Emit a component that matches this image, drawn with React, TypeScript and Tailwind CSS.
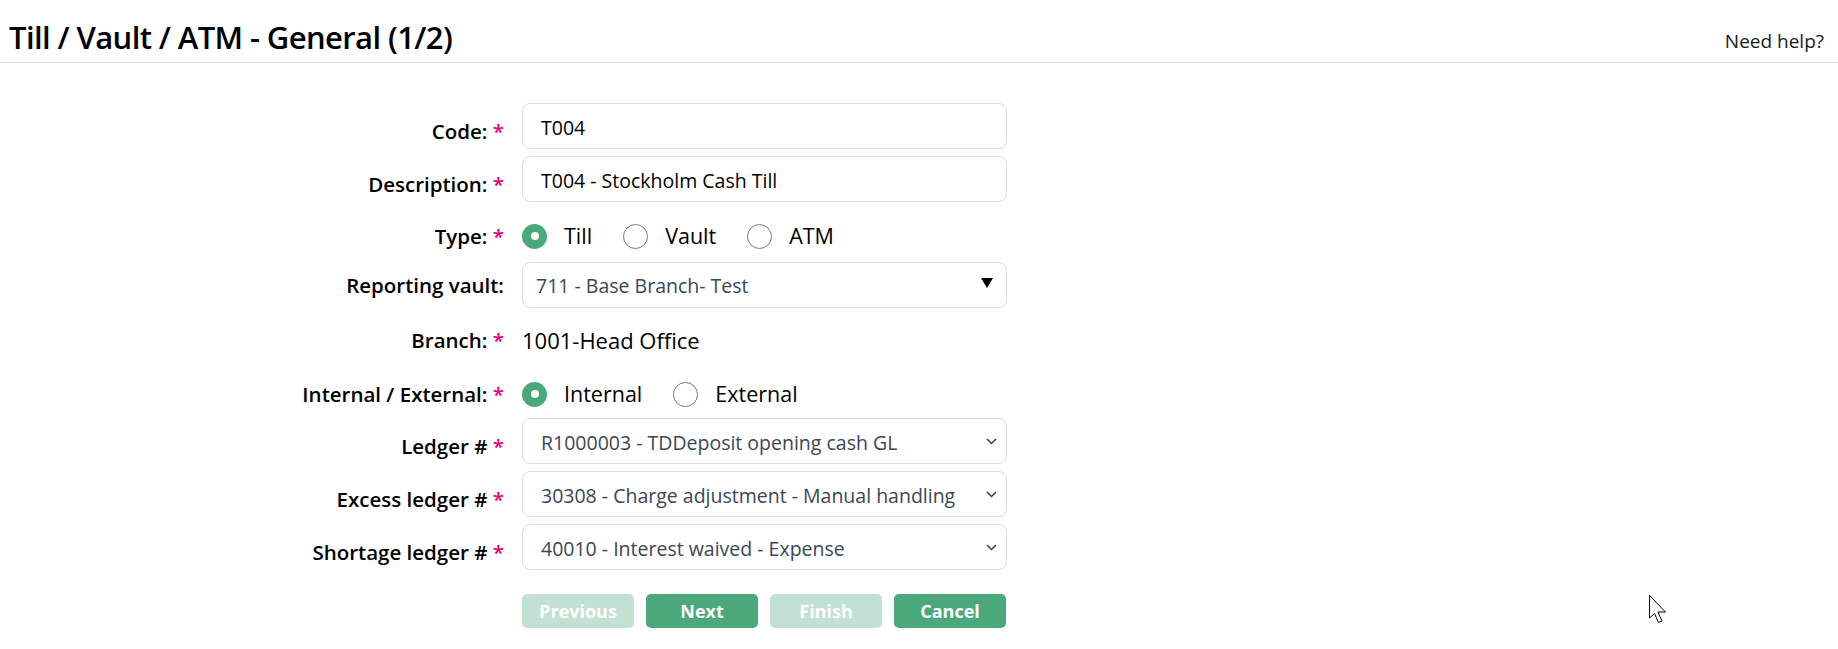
import React from 'react';

const FONT = "font-['Open_Sans','Liberation_Sans',sans-serif]";

function Label({ text, required = true, low }: { text: string; required?: boolean; low?: boolean }) {
  return (
    <div
      className={`w-[505px] shrink-0 text-right text-[20.5px] font-semibold text-black whitespace-nowrap pr-px ${
        low ? 'pt-[10px]' : ''
      }`}
    >
      {text}
      {required && <span className="text-[#e6007e]"> *</span>}
    </div>
  );
}

function TextInput({ value }: { value: string }) {
  return (
    <div className="ml-[17px] w-[485px] h-[46px] flex items-center pl-[18px] pt-[3px] rounded-[8px] border border-[#dddddd] bg-white text-[19.5px] text-black">
      {value}
    </div>
  );
}

function Chevron() {
  return (
    <svg width="11" height="7" viewBox="0 0 11 7" className="shrink-0">
      <path d="M1 1 L5.5 5.5 L10 1" fill="none" stroke="#3a3a3a" strokeWidth="1.5" />
    </svg>
  );
}

function LedgerSelect({ value }: { value: string }) {
  return (
    <div className="ml-[17px] w-[485px] h-[46px] flex items-center justify-between pl-[18px] pr-[9px] rounded-[8px] border border-[#dddddd] bg-white text-[19.5px] text-[#3b4658]">
      <span className="pt-[3px]">{value}</span>
      <Chevron />
    </div>
  );
}

function Radio({ label, checked }: { label: string; checked?: boolean }) {
  return (
    <div className="flex items-center mr-[31px]">
      {checked ? (
        <span className="w-[25px] h-[25px] rounded-full bg-[#4ba87b] flex items-center justify-center">
          <span className="w-[8px] h-[8px] rounded-full bg-white" />
        </span>
      ) : (
        <span className="w-[25px] h-[25px] rounded-full border border-[#7a7a7a] bg-white" />
      )}
      <span className="ml-[17px] text-[21.5px] text-black">{label}</span>
    </div>
  );
}

function Button({ text, disabled }: { text: string; disabled?: boolean }) {
  return (
    <button
      className={`w-[112px] h-[34px] rounded-[5px] text-white text-[18px] font-bold flex items-center justify-center ${
        disabled ? 'bg-[#c2e1d2]' : 'bg-[#4ba87b]'
      }`}
    >
      {text}
    </button>
  );
}

export default function App() {
  return (
    <div className={`relative w-[1838px] h-[649px] bg-white text-black overflow-hidden ${FONT}`}>
      {/* Header */}
      <div className="h-[63px] border-b border-[#dcdcdc] flex items-end justify-between pl-[9px] pr-[14px]">
        <h1 className="text-[31px] font-semibold leading-none mb-[9px] tracking-[-0.6px]">
          Till / Vault / ATM - General (1/2)
        </h1>
        <a className="text-[19px] leading-none mb-[11px] text-[#1a1a1a]">Need help?</a>
      </div>

      {/* Form */}
      <div className="flex flex-col pt-[40px]">
        <div className="flex items-center">
          <Label text="Code:" low />
          <TextInput value="T004" />
        </div>
        <div className="flex items-center mt-[7px]">
          <Label text="Description:" low />
          <TextInput value="T004 - Stockholm Cash Till" />
        </div>
        <div className="flex items-center h-[46px] pt-[8px] mt-[7px]">
          <Label text="Type:" />
          <div className="ml-[17px] flex items-center">
            <Radio label="Till" checked />
            <Radio label="Vault" />
            <Radio label="ATM" />
          </div>
        </div>
        <div className="flex items-center mt-[7px]">
          <Label text="Reporting vault:" required={false} />
          <div className="ml-[17px] w-[485px] h-[46px] flex items-center justify-between pl-[13px] pr-[13px] rounded-[8px] border border-[#dddddd] bg-white text-[19.5px] text-[#3b4658]">
            <span className="pt-[2px]">711 - Base Branch- Test</span>
            <svg width="12" height="10" viewBox="0 0 12 10" className="mb-[4px]">
              <polygon points="0,0 12,0 6,10" fill="#000" />
            </svg>
          </div>
        </div>
        <div className="flex items-center h-[45px] pt-[5px] mt-[7px]">
          <Label text="Branch:" />
          <div className="ml-[17px] text-[22px] text-black">1001-Head Office</div>
        </div>
        <div className="flex items-center h-[44px] pt-[10px] mt-[7px]">
          <Label text="Internal / External:" />
          <div className="ml-[17px] flex items-center">
            <Radio label="Internal" checked />
            <Radio label="External" />
          </div>
        </div>
        <div className="flex items-center mt-[7px]">
          <Label text="Ledger #" low />
          <LedgerSelect value="R1000003 - TDDeposit opening cash GL" />
        </div>
        <div className="flex items-center mt-[7px]">
          <Label text="Excess ledger #" low />
          <LedgerSelect value="30308 - Charge adjustment - Manual handling" />
        </div>
        <div className="flex items-center mt-[7px]">
          <Label text="Shortage ledger #" low />
          <LedgerSelect value="40010 - Interest waived - Expense" />
        </div>
        <div className="flex items-center mt-[24px] ml-[522px] gap-[12px]">
          <Button text="Previous" disabled />
          <Button text="Next" />
          <Button text="Finish" disabled />
          <Button text="Cancel" />
        </div>
      </div>

      {/* Mouse cursor */}
      <svg className="absolute left-[1649px] top-[595px]" width="20" height="32" viewBox="0 0 20 32">
        <path
          d="M0.5 0.5 L0.5 23 L5.5 18.5 L9.5 27.5 L13 26 L9 17 L16.5 17 Z"
          fill="#fff"
          stroke="#000"
          strokeWidth="1"
          strokeLinejoin="miter"
        />
      </svg>
    </div>
  );
}
